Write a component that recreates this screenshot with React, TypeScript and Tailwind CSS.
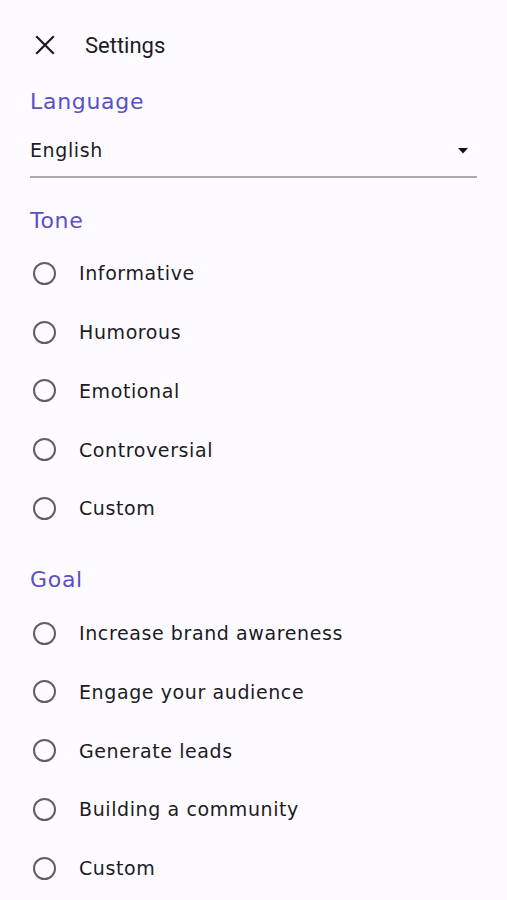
import React from "react";

const tones = ["Informative", "Humorous", "Emotional", "Controversial", "Custom"];
const goals = [
  "Increase brand awareness",
  "Engage your audience",
  "Generate leads",
  "Building a community",
  "Custom",
];

function Radio({ label }: { label: string }) {
  return (
    <div className="flex items-center h-[58.75px] pl-[33px]">
      <div className="w-[23px] h-[23px] rounded-full border-[2px] border-[#5f5e63] shrink-0" />
      <span className="ml-[23px] text-[19px] leading-[24px] text-[#1c1b1f] tracking-[0.6px]">
        {label}
      </span>
    </div>
  );
}

function Heading({ children }: { children: React.ReactNode }) {
  return (
    <div className="h-[28px] flex items-center pl-[30px] text-[22px] text-[#5b4fc7] tracking-[0.7px]">
      {children}
    </div>
  );
}

export default function App() {
  return (
    <div
      className="w-[507px] h-[900px] bg-[#fdfbff] overflow-hidden"
      style={{ fontFamily: "'DejaVu Sans', sans-serif" }}
    >
      <div className="h-[90px] pt-[17px] flex items-start">
        <div className="h-[56px] flex items-center">
          <svg width="20" height="20" viewBox="0 0 20 20" className="ml-[35px] -mt-[1px]">
            <path d="M2 2 L18 18 M18 2 L2 18" stroke="#1c1b1f" strokeWidth="2.2" strokeLinecap="square" />
          </svg>
          <span
            className="ml-[30px] text-[22px] text-[#1c1b1f] whitespace-nowrap"
            style={{ fontFamily: "Roboto, sans-serif" }}
          >
            Settings
          </span>
        </div>
      </div>
      <div className="-mt-[3px]">
        <Heading>Language</Heading>
      </div>
      <div className="mx-[30px] mt-[13px] h-[50px] border-b-[2px] border-[#a9a9ad] flex items-center justify-between">
        <span className="text-[19px] text-[#1c1b1f] tracking-[0.6px] -mt-[4px]">English</span>
        <svg width="10" height="6" viewBox="0 0 10 6" className="mr-[9px] -mt-[2px]">
          <path d="M0 0 L10 0 L5 5.5 Z" fill="#111" />
        </svg>
      </div>
      <div className="mt-[28px]">
        <Heading>Tone</Heading>
      </div>
      <div className="mt-[10px]">
        {tones.map((t, i) => (
          <Radio key={"t" + i} label={t} />
        ))}
      </div>
      <div className="mt-[28px]">
        <Heading>Goal</Heading>
      </div>
      <div className="mt-[10px]">
        {goals.map((t, i) => (
          <Radio key={"g" + i} label={t} />
        ))}
      </div>
    </div>
  );
}
